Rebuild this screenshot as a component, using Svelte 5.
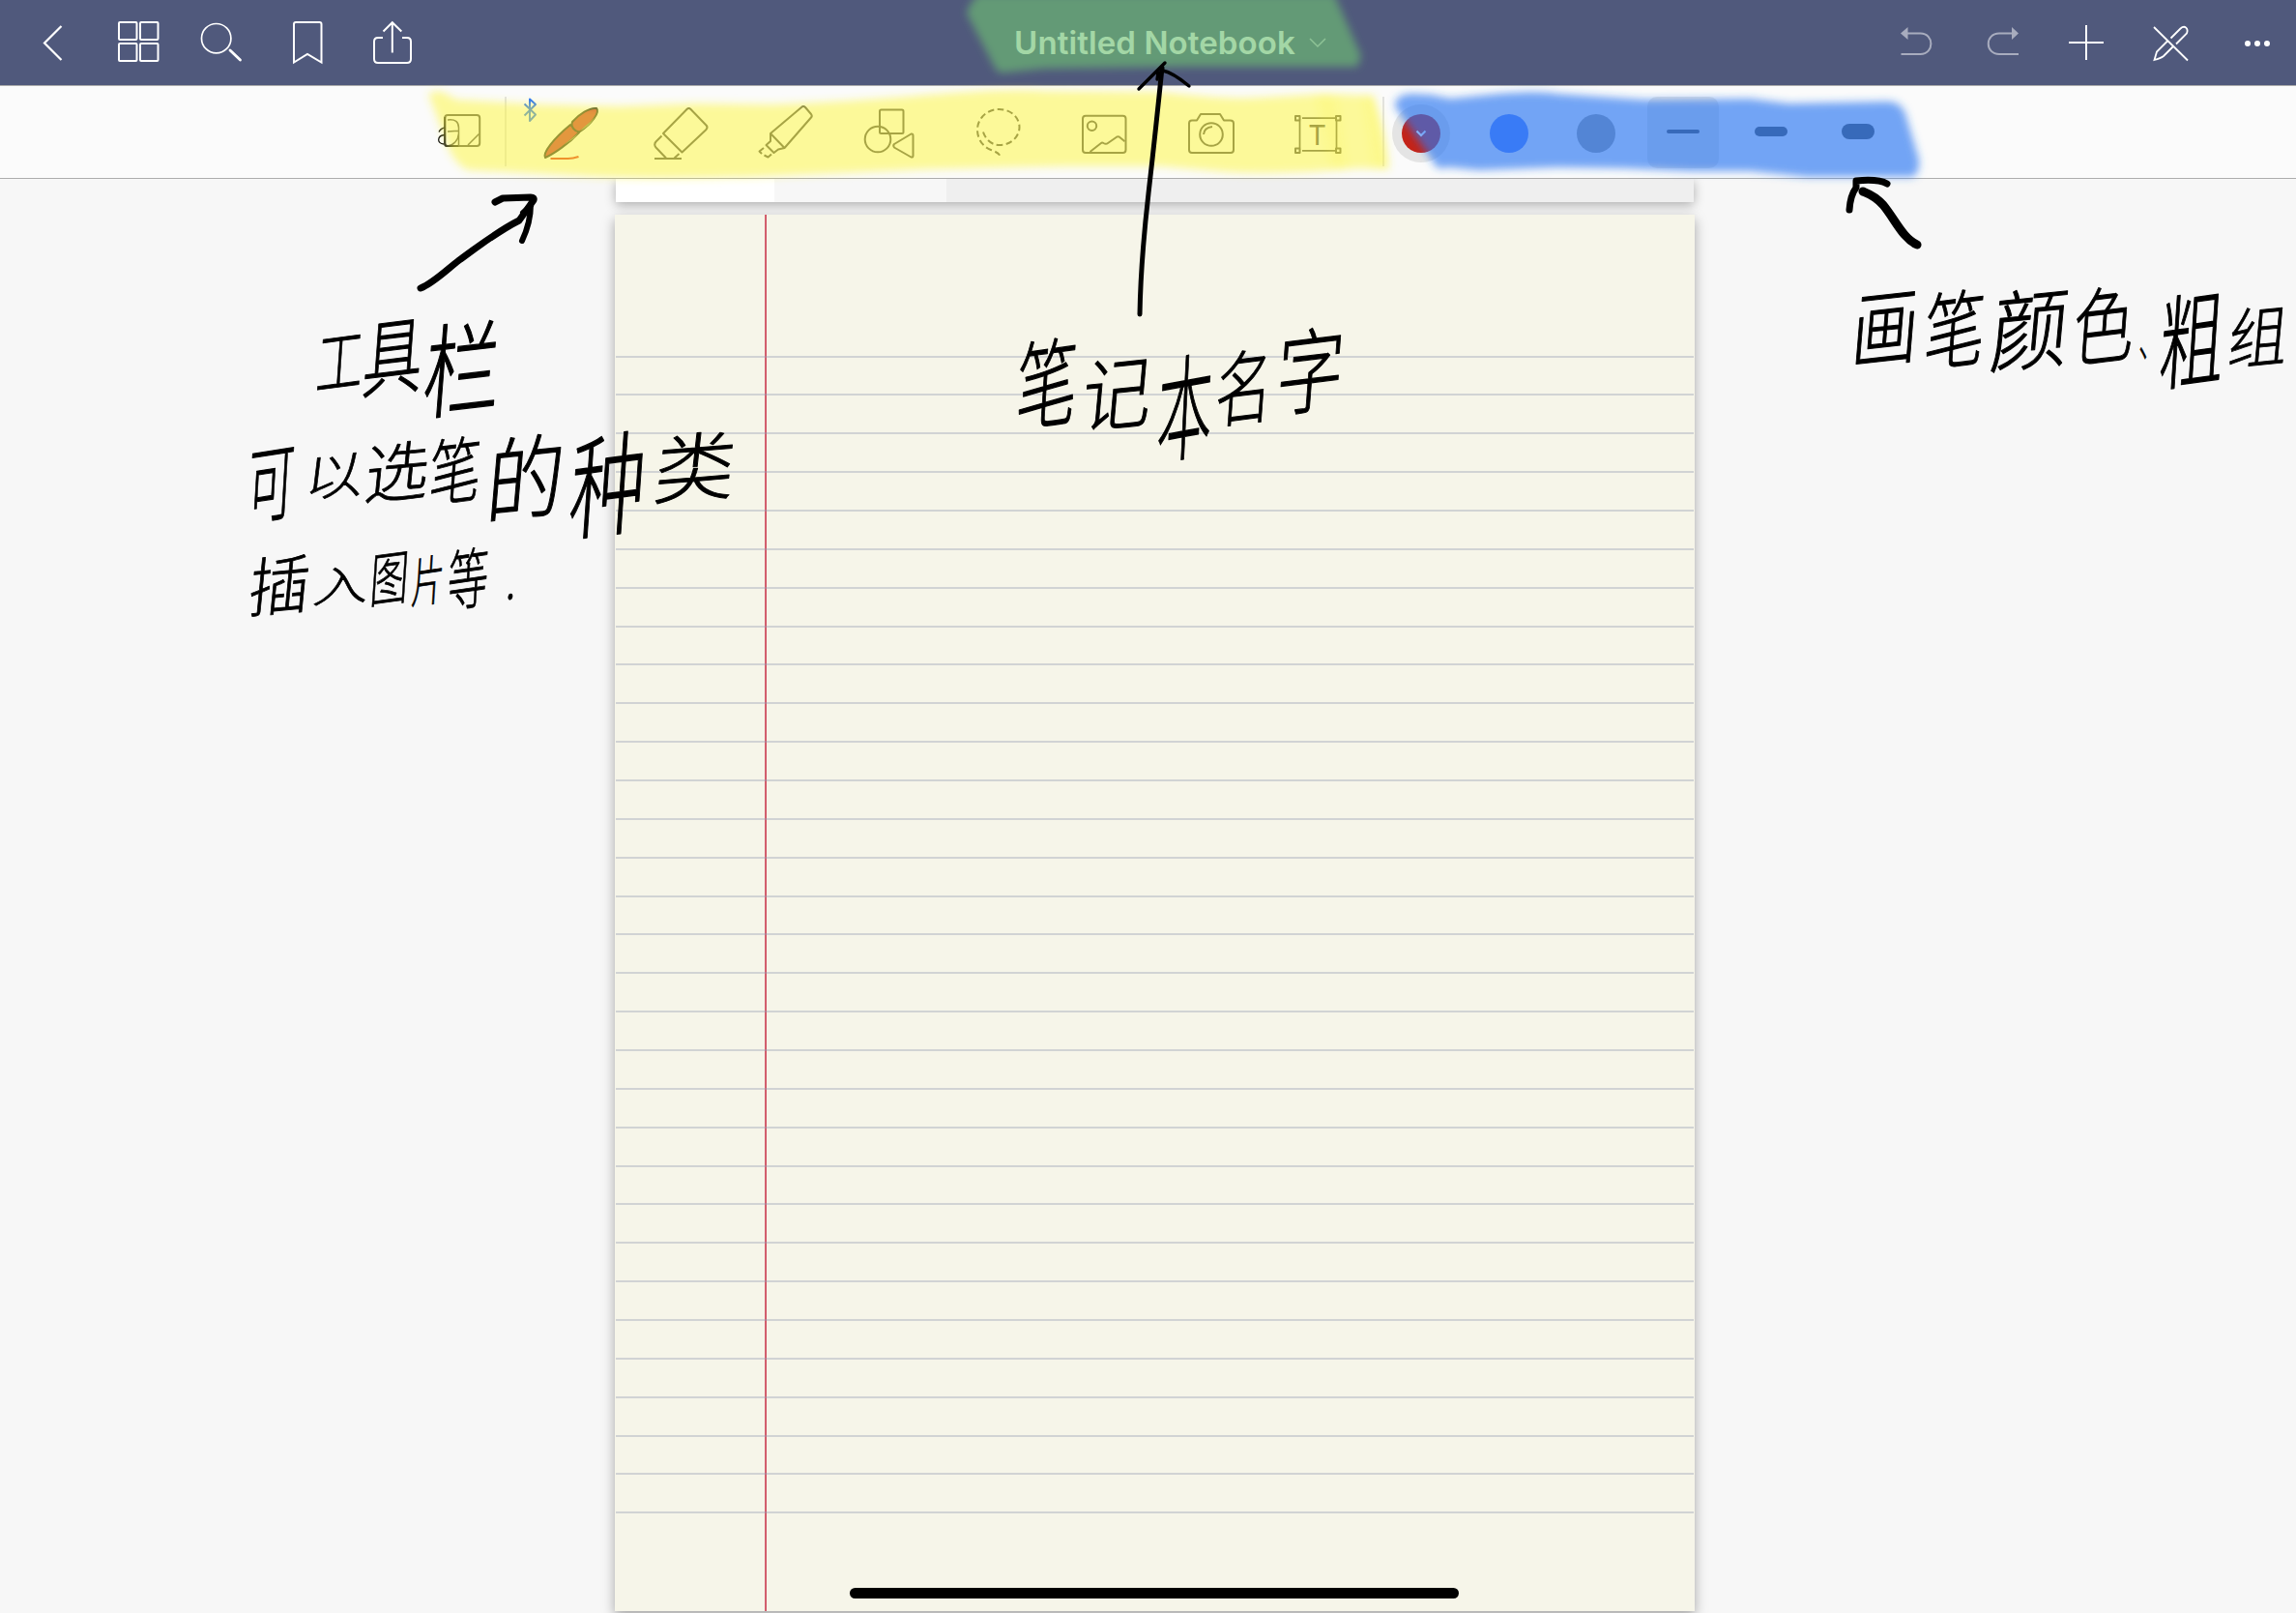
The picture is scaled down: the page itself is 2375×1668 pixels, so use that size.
<script>
  const ruleCount = 31;

  // Handwritten notes: each glyph is fitted to its own box [char, left, top, width, height]
  const notes = [
    {
      name: 'toolbar',
      glyphs: [
        ['工', 330, 338, 46, 70], ['具', 378, 326, 59, 84], ['栏', 440, 330, 76, 102],
        ['可', 259, 457, 46, 84], ['以', 318, 466, 58, 50], ['选', 380, 455, 63, 65],
        ['笔', 447, 450, 51, 72], ['的', 506, 448, 76, 92], ['种', 592, 445, 74, 112],
        ['类', 679, 445, 80, 75], ['插', 260, 573, 60, 64], ['入', 327, 584, 55, 42],
        ['图', 386, 568, 38, 59], ['片', 429, 573, 32, 54], ['等', 466, 565, 40, 66],
        ['.', 527, 569, 40, 54]
      ]
    },
    {
      name: 'title',
      glyphs: [
        ['笔', 1054, 348, 60, 96], ['记', 1122, 366, 68, 80], ['本', 1200, 364, 54, 114],
        ['名', 1260, 360, 56, 81], ['字', 1323, 337, 66, 92]
      ]
    },
    {
      name: 'brush',
      glyphs: [
        ['画', 1918, 296, 66, 84], ['笔', 1993, 298, 60, 84], ['颜', 2062, 296, 76, 88],
        ['色', 2147, 294, 60, 84], ['、', 2216, 325, 24, 48], ['粗', 2236, 300, 64, 102],
        ['组', 2308, 315, 58, 66]
      ]
    }
  ];

  const fit = ([, x, y, w, h]) =>
    `translate(${x - 4} ${y}) scale(${(w * 1.04) / 100} ${(h * 1.04) / 100}) translate(4 3) skewX(-6) skewY(-5) translate(4 88)`;
</script>

<div class="app">
  <header class="nav">
    <div class="group left">
      <svg class="ic" width="104" height="88" viewBox="0 0 104 88"><path d="M63.500 27 46 44.500 63.500 62" stroke-width="2.200" /></svg>
      <svg class="ic" width="84" height="88" viewBox="104 0 84 88">
        <rect x="123" y="23" width="18.500" height="18" rx="1" /><rect x="145" y="23" width="18.500" height="18" rx="1" />
        <rect x="123" y="45" width="18.500" height="18" rx="1" /><rect x="145" y="45" width="18.500" height="18" rx="1" />
      </svg>
      <svg class="ic" width="84" height="88" viewBox="188 0 84 88"><circle cx="223.700" cy="39.700" r="15.200" stroke-width="1.700" /><path d="m238 52 10.500 10" stroke-width="2.800" stroke-linecap="round" /></svg>
      <svg class="ic" width="88" height="88" viewBox="272 0 88 88"><path d="M304 64.500V25q0-2 2-2h24.500q2 0 2 2v39.500L318 56Z" /></svg>
      <svg class="ic" width="90" height="88" viewBox="360 0 90 88"><path d="M396 39h-5q-4 0-4 4v18q0 4 4 4h30q4 0 4-4V43q0-4-4-4h-5M405.800 54.500V23.500M396.500 32.500l9.300-9.300 9.500 9.300" /></svg>
    </div>
    <div class="title">
      <span>Untitled Notebook</span>
      <svg class="ic" width="18" height="12" viewBox="1354 38 18 12"><path d="m1355 40 8 8 8-8" stroke="#c5c8d4" stroke-width="1.500" /></svg>
    </div>
    <div class="group right">
      <svg class="ic dim" width="90" height="88" viewBox="1938 0 90 88"><path d="M1972 34.500h14.500c14.500 0 14.500 21.500 0 21.500h-20" /><path class="solid" d="m1966 34.500 7.500-6.500v13Z" /></svg>
      <svg class="ic dim" width="87" height="88" viewBox="2028 0 87 88"><path d="M2082 34.500h-14c-15 0-15 21.500 0 21.500h20" /><path class="solid" d="m2088 34.500-7-6.500v13Z" /></svg>
      <svg class="ic" width="87" height="88" viewBox="2115 0 87 88"><path d="M2140 44h36M2158 26v36" /></svg>
      <svg class="ic" width="87" height="88" viewBox="2202 0 87 88"><path d="m2228 28 35 34.500M2245.500 39.500l10-10c4.500-4 8.500 0 6.500 5l-11 11M2242 42.500l-11 11-2.500 8.500c4-1 7-2 9.500-4l9.500-9.500" stroke-width="1.800" /></svg>
      <svg class="ic" width="86" height="88" viewBox="2289 0 86 88"><path class="solid" d="M2322 45a3 3 0 1 0 6 0 3 3 0 1 0-6 0M2332 45a3 3 0 1 0 6 0 3 3 0 1 0-6 0M2342 45a3 3 0 1 0 6 0 3 3 0 1 0-6 0" /></svg>
    </div>
  </header>

  <div class="tools">
    <svg class="tool" width="75" height="95" viewBox="447 89 75 95">
      <rect x="460.200" y="119" width="36" height="32" rx="3" />
      <path d="M463 124c8-1 11.500 2 11.500 8v18.500M463 136l11-.8M474.500 138c-.5 7-5 12-11.500 13M484 150l11.500-11.500" stroke-width="1.500" />
      <path d="M460.200 121v28q0 2 2 2h12" stroke="#222" />
      <path d="M454 136.500q1.500-3.500 6-4.500M460 139.500c-8 .5-8.500 9-1 9.500" stroke-width="1.300" stroke="#111" />
    </svg>
    <i class="sep"></i>
    <svg class="tool pen" width="110" height="95" viewBox="537 89 110 95">
      <path d="m542.500 107.500 11.500 11-6 6.500v-22.500l6 5.500-11.500 11.500" stroke="#1f6fff" stroke-width="1.900" />
      <path class="dark" d="M564 163c-3-5 9-20 26-34l9 8c-10 11-26 22-35 26Z" fill="#c83644" />
      <path class="dark" d="M592 126c7-8 18-15 25-14 4 4-5 16-17 24-5 1-10-5-8-10Z" fill="#c83644" />
      <path d="M600 135.500c5-6 10-8 15-14-3 6-9 11-15 14ZM583 150l15-12-4 5Z" fill="#888f60" stroke="none" />
      <path d="M569.500 164h18c5 0 8-1 11-2" stroke="#e02c20" stroke-width="2.200" />
    </svg>
    <svg class="tool" width="110" height="95" viewBox="647 89 110 95">
      <path d="m686 138 24.500-25q2-2 4 0l16 16.500q2 2 0 4.500l-25 23.500ZM684.500 140.500l-6 6q-2.500 3 0 6l10.500 11M702.500 159l-5 4.500M677 164h28" />
    </svg>
    <svg class="tool" width="110" height="95" viewBox="757 89 110 95">
      <path d="m797 138 32-27q2-2 4 0l6 7q1.500 2 0 3.500L811.500 153ZM797 138l0 8-4.500 4 8 8 4.500-3.500 6.500-1.500M790 153l-4.500 3.500 2.500 2.500M790.500 160.500l4 2 3.500-3" />
    </svg>
    <svg class="tool" width="110" height="95" viewBox="867 89 110 95">
      <rect x="910" y="113.500" width="24.500" height="24.500" rx="1.500" /><circle cx="908" cy="144" r="13.300" /><path d="m925 149 17.500-10.500q2-.5 2 2V161q0 2-2 1.500L925 152.500q-1.500-2 0-3.500Z" />
    </svg>
    <svg class="tool" width="110" height="95" viewBox="977 89 110 95">
      <path d="M1017 136.500c2 6 7 13.500 17 13.500 12 0 20.500-9 20.500-18.500s-8-18.500-21-18.500-22.500 10-22.500 21 7 18.500 14 21c5 2 10 3.500 10 9" stroke-dasharray="6.500 3.500" />
    </svg>
    <svg class="tool" width="110" height="95" viewBox="1087 89 110 95">
      <rect x="1120" y="119.800" width="44.500" height="38.200" rx="3" /><circle cx="1129.500" cy="130.300" r="4.700" /><path d="m1127.500 157 11.500-9q1-1 2.500 0 2.500 1.500 4.500 0l9-6.300q1.500-1 3 0l5.500 4.500" />
    </svg>
    <svg class="tool" width="110" height="95" viewBox="1197 89 110 95">
      <path d="M1233 124.500h5l4-6.500h20l4 6.500h6.500q3.500 0 3.500 3V155q0 3-3 3h-40q-3 0-3-3v-27.500q0-3 3-3Z" /><circle cx="1253" cy="139" r="11.800" /><path d="M1245 139q.5-7 9-8" />
    </svg>
    <svg class="tool" width="110" height="95" viewBox="1307 89 110 95">
      <path d="M1344.500 125v28M1347 122.200h34M1382.500 125v28M1347 155.800h34" stroke-width="1.700" />
      <rect x="1340" y="120" width="4.500" height="4.500" /><rect x="1382" y="120" width="4.500" height="4.500" /><rect x="1340" y="153.500" width="4.500" height="4.500" /><rect x="1382" y="153.500" width="4.500" height="4.500" />
      <text class="tee" x="1362.500" y="150">T</text>
    </svg>
    <i class="sep second"></i>
    <div class="slot"><i class="dot red"><svg width="12" height="8" viewBox="0 0 12 8"><path d="m1.500 1.500 4.500 4.500 4.500-4.500" fill="none" stroke="#fff" stroke-width="2" /></svg></i></div>
    <div class="slot"><i class="dot blue"></i></div>
    <div class="slot"><i class="dot gray"></i></div>
    <div class="slot"><i class="picked"><i class="bar thin"></i></i></div>
    <div class="slot"><i class="bar medium"></i></div>
    <div class="slot"><i class="bar thick"></i></div>
  </div>

  <main class="canvas">
    <section class="previous"><i></i><i></i></section>
    <section class="paper">
      {#each Array(ruleCount) as _}<i class="rule"></i>{/each}
    </section>
  </main>

  <svg class="ink" width="2375" height="1668" viewBox="0 0 2375 1668">
    <defs><filter id="soft" x="-5%" y="-20%" width="110%" height="140%"><feGaussianBlur stdDeviation="4" /></filter></defs>
    <g filter="url(#soft)">
      <path fill="#fef83a" fill-opacity=".5" d="M443 97Q452 92 460 96L472 103 560 108 640 110 720 107 800 108Q880 105 960 98T1080 94L1200 95Q1270 103 1300 101L1370 97 1420 99Q1433 130 1437 175L1405 174Q1330 181 1270 178L1200 172 1100 172 960 175 800 182Q700 186 620 183L484 176Q474 172 466 158Z" />
      <path fill="#fef83a" fill-opacity=".15" d="M1360 97h22l12 78h-16ZM1409 98h14l12 77h-14Z" />
    </g>
    <path filter="url(#soft)" fill="#6ec072" fill-opacity=".63" d="M1000 14Q1002 4 1012-6H1380L1408 58 1404 69 1230 69 1080 71 1040 75Q1032 77 1028 68Z" />
    <path filter="url(#soft)" fill="#2976f2" fill-opacity=".66" d="M1443 110Q1443 98 1460 97L1480 98 1500 102 1540 98Q1590 93 1610 97L1700 103 1810 102 1850 107 1950 105Q1966 104 1971 118L1985 165Q1986 183 1975 183L1870 183 1810 177 1750 177 1680 174 1610 173 1530 176 1500 173 1487 174Z" />
    <g class="stroke">
      <path stroke-width="7" d="M435 298C448 293 462 279 475 269 497 253 515 239 537 228L552 207Q553 204 549 204L520 205 512 209" />
      <path stroke-width="6" d="M549 211Q549 230 540 249M541 220l8-7" />
      <path stroke-width="5" d="M1179 325Q1180 270 1188 200T1202 70" />
      <path stroke-width="3.400" d="M1178 92 1205 65M1203 73Q1213 75 1230 89M1197 82l1-7" />
      <path stroke-width="9" d="M1983 253C1968 246 1961 228 1948 212 1939 202 1932 200 1927 198" />
      <path stroke-width="7" d="M1952 190C1943 185 1930 186 1920 187L1920 194Q1914 202 1913 217" />
    </g>
    {#each notes as note (note.name)}
      <g class="note">
        {#each note.glyphs as glyph}
          <text transform={fit(glyph)}>{glyph[0]}</text>
        {/each}
      </g>
    {/each}
  </svg>
  <div class="home"></div>
</div>

<style>
  :global(body) { background: #f7f7f7; overflow: hidden; }
  .app { position: relative; width: 2375px; height: 1668px; overflow: hidden; background: #f7f7f7; font-family: Inter, "Liberation Sans", sans-serif; display: flex; flex-direction: column; }
  .nav { box-sizing: border-box; height: 89px; flex: none; background: #50597c; border-bottom: 1px solid #acacac; display: flex; justify-content: space-between; }
  .group { display: flex; width: 450px; }
  .right { justify-content: flex-end; }
  .title { display: flex; align-items: center; gap: 12px; margin-left: 46px; color: #fff; font-size: 33px; font-weight: 600; line-height: 88px; white-space: nowrap; }
  .title span { width: 293px; letter-spacing: 0.1px; }
  .ic { fill: none; stroke: #fff; stroke-width: 2; flex: none; }
  .dim { opacity: .5; }
  .solid { fill: #fff; stroke: none; }
  .tools { box-sizing: border-box; height: 96px; flex: none; padding-left: 447px; display: flex; background: #fbfbfb; border-bottom: 1px solid #acacac; }
  .tool { flex: none; fill: none; stroke: #505050; stroke-width: 2; stroke-linejoin: round; stroke-linecap: butt; }
  .dark { stroke: #303030; }
  .tee { fill: #505050; stroke: none; font: 400 29px Inter, sans-serif; text-anchor: middle; }
  .sep { flex: none; width: 2px; height: 72px; margin-top: 11px; background: #e2e2e2; }
  .pen { margin-left: 13px; }
  .second { margin: 11px -7px 0 13px; }
  .slot { width: 90.4px; flex: none; height: 95px; display: flex; align-items: center; justify-content: center; }
  .dot { width: 40px; height: 40px; margin-top: 3px; border-radius: 50%; display: flex; align-items: center; justify-content: center; }
  .red { background: #c42318; box-shadow: 0 0 0 10px #e4e4e4; }
  .blue { background: #5582ff; }
  .gray { background: #a0a0a0; }
  .picked { width: 74px; height: 74px; border-radius: 10px; background: #e5e5e5; display: flex; align-items: center; justify-content: center; }
  .bar { width: 34px; margin-bottom: 1px; background: #505050; }
  .thin { height: 4px; border-radius: 2px; }
  .medium { height: 10px; border-radius: 5px; }
  .thick { height: 16px; border-radius: 8px; }
  .canvas { flex: 1; display: flex; flex-direction: column; align-items: flex-start; padding-left: 636px; overflow: hidden; }
  .previous { width: 1115px; height: 24px; margin-left: 1px; flex: none; display: flex; background: #efefef; box-shadow: 0 3px 12px rgba(0, 0, 0, .3); }
  .previous i { width: 164px; background: #fff; }
  .previous i + i { width: 178px; background: #f7f7f7; }
  .paper { box-sizing: border-box; width: 1117px; height: 1444px; margin-top: 13px; flex: none; padding: 145.500px 1px 0; background: linear-gradient(90deg, transparent 155px, #d8707c 155px, #cc4a5c 157px, transparent 157px), #f6f5e9; box-shadow: 0 5px 12px rgba(0, 0, 0, .34); }
  .rule { display: block; height: 2px; margin-bottom: 37.87px; background: rgba(150, 155, 180, .38); }
  .ink { position: absolute; inset: 0; pointer-events: none; }
  .stroke { fill: none; stroke: #000; stroke-linecap: round; stroke-linejoin: round; }
  .note { fill: #000; stroke: #000; stroke-width: 1.2; stroke-linejoin: round; font: 300 100px "Noto Sans CJK SC", sans-serif; }
  .home { position: absolute; left: 879px; top: 1642px; width: 630px; height: 11px; border-radius: 6px; background: #000; }
</style>
